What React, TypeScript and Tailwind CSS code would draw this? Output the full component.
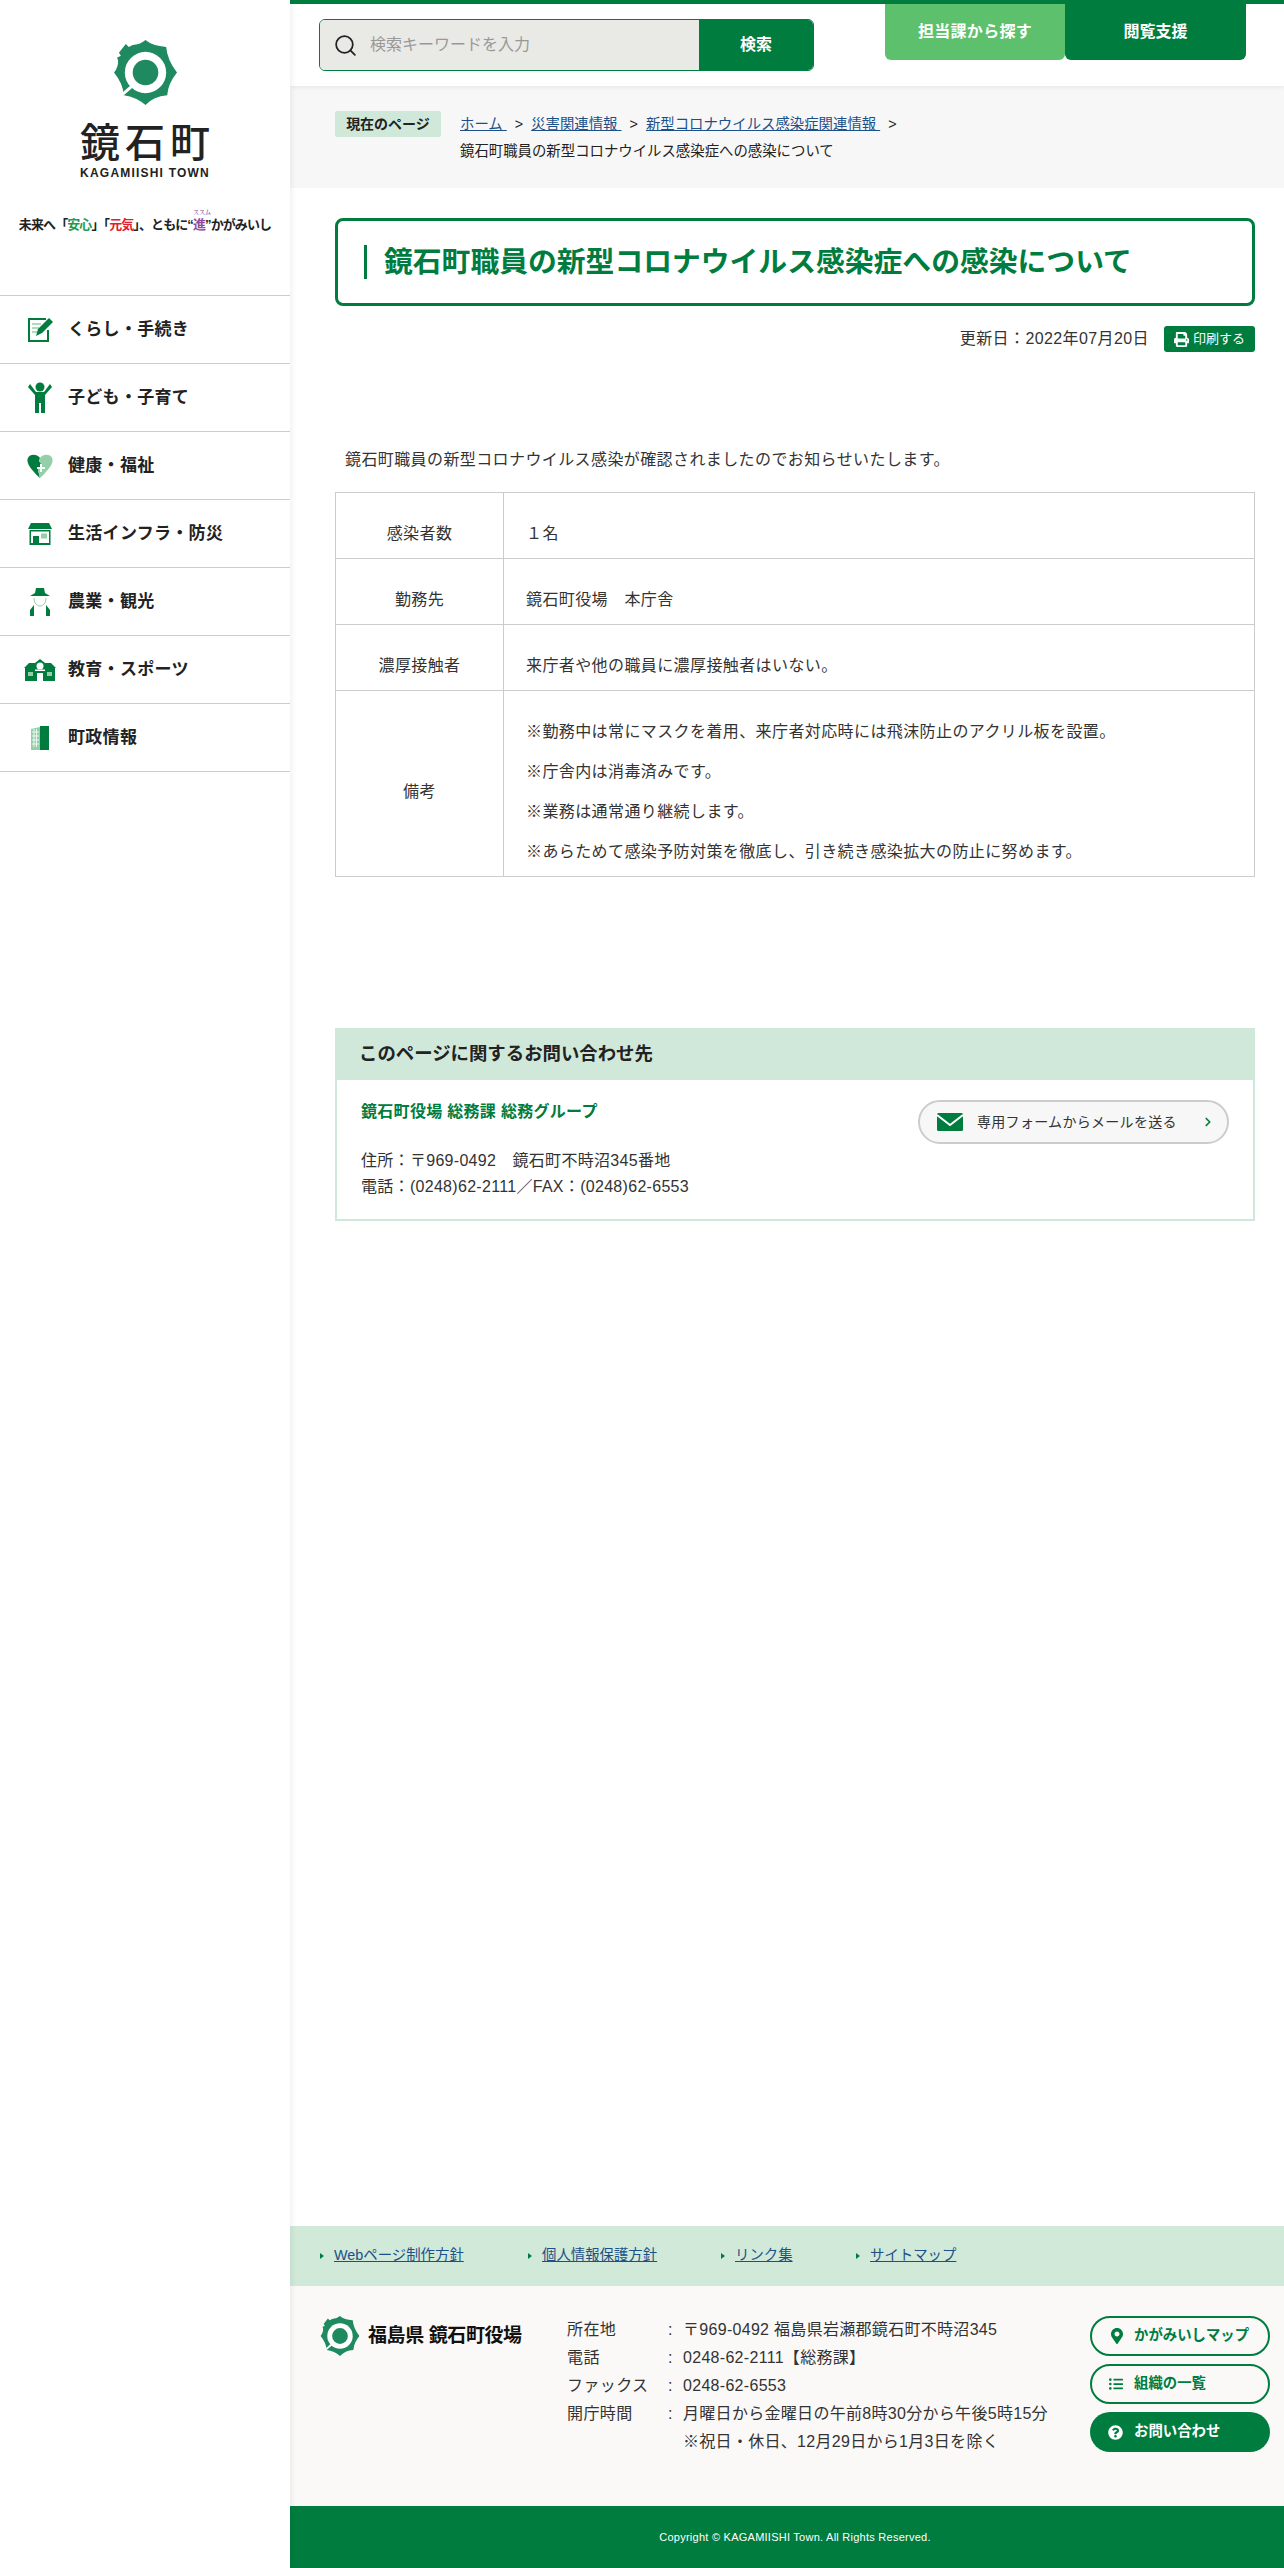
import { ChevronRight, Search } from "lucide-react";
import { FaListUl, FaMapMarkerAlt, FaPrint, FaQuestionCircle } from "react-icons/fa";

const green = "text-[#007c3f]";

function Logo({ size }: { size: number }) {
    return (
        <svg width={size} height={size} viewBox="0 0 64 66" className="shrink-0">
            <path
                fill="#1f8a5f"
                d="M32 0 Q39 6 53 7 Q54 20 64 33 Q55 44 54 56 Q40 57 32 66 Q23 58 10 56 Q9 44 0 33 Q5 27 4 20 L3 18 L7 16 L5 13 L12 4 L15 7 L19 5 Q26 5 32 0 Z"
            />
            <circle cx="32" cy="33" r="21" fill="#fff" />
            <circle cx="32" cy="33" r="13" fill="#1f8a5f" />
            <path d="M9 55 L18 47" stroke="#fff" strokeWidth="3" />
        </svg>
    );
}

function NavIcon({ kind }: { kind: number }) {
    const c = "#007c3f";
    const light = "#93cfa9";
    if (kind === 0)
        return (
            <svg width="26" height="26" viewBox="0 0 26 26">
                <path d="M19 2H2v22h19V13" fill="none" stroke={c} strokeWidth="2" />
                <path d="M5 7h9M5 11h7M5 15h5" stroke={light} strokeWidth="1.5" />
                <path d="M22 1l4 4-11 11-6 3 2-7z" fill={c} />
            </svg>
        );
    if (kind === 1)
        return (
            <svg width="24" height="32" viewBox="0 0 24 32">
                <circle cx="12" cy="5" r="4.5" fill={c} />
                <path d="M2 2L0 5l7 8v18h4V21h2v10h4V13l7-8-2-3-6 8H8z" fill={c} />
            </svg>
        );
    if (kind === 2)
        return (
            <svg width="26" height="24" viewBox="0 0 26 24">
                <path d="M13 4C10 0 4 0 1.500 3S0 12 13 24l-2-8 4-5-3-4z" fill={c} />
                <path d="M13 4c3-4 9-4 11.500-1S26 12 13 24l-2-8 4-5-3-4z" fill={light} />
                <path d="M10 13h3v-3h2v3h3v2h-3v3h-2v-3h-3z" fill="#fff" />
            </svg>
        );
    if (kind === 3)
        return (
            <svg width="24" height="22" viewBox="0 0 24 22">
                <path d="M3 0h18l3 6H0z" fill={c} />
                <path d="M1.500 7h21v15h-21z" fill={c} />
                <path d="M3 8.500h18V20H3z" fill="#fff" />
                <path d="M5 13h6v9H5z" fill={c} />
                <path d="M13 10.500h6v5h-6z" fill={light} />
            </svg>
        );
    if (kind === 4)
        return (
            <svg width="20" height="28" viewBox="0 0 20 28">
                <path d="M6 0h8l1 5 5 3H0l5-3z" fill={c} />
                <path d="M4 10c0 5 3 8 6 8s6-3 6-8" fill="none" stroke={light} strokeWidth="1" />
                <path d="M4 17L0 22v6h4v-6zM16 17l4 5v6h-4v-6z" fill={c} />
            </svg>
        );
    if (kind === 5)
        return (
            <svg width="32" height="22" viewBox="0 0 32 22">
                <path d="M0 9l5-5h6l5-4 5 4h6l5 5z" fill={c} />
                <path d="M1 9h30v13H1z" fill={c} />
                <path d="M4 13h5v4H4zM23 13h5v4h-5z" fill={light} />
                <circle cx="16" cy="7" r="3.500" fill="#fff" />
                <path d="M13 14h6v8h-6zM11 10.500h10v1.500H11z" fill="#fff" />
            </svg>
        );
    return (
        <svg width="20" height="24" viewBox="0 0 20 24">
            <path d="M1 3l9-2v23H1z" fill={light} />
            <path d="M10 0h9v24h-9z" fill={c} />
            <path d="M2 6h7M2 10h7M2 14h7M2 18h7M4 3v18M6.500 3v18" stroke="#fff" strokeWidth="0.8" />
        </svg>
    );
}

const navItems = ["くらし・手続き", "子ども・子育て", "健康・福祉", "生活インフラ・防災", "農業・観光", "教育・スポーツ", "町政情報"];

function Sidebar() {
    return (
        <aside className="w-[290px] shrink-0 bg-white relative z-10 shadow-[2px_0_5px_rgba(0,0,0,0.06)]">
            <div className="h-[295px] flex flex-col items-center pt-[40px]">
                <Logo size={65} />
                <div className="mt-[15px] text-[40px] leading-[46px] font-medium text-[#222] tracking-[5px] pl-[5px]">鏡石町</div>
                <div className="text-[12px] leading-[14px] font-bold tracking-[1.2px] text-[#222]">KAGAMIISHI TOWN</div>
                <div className="mt-[36px] text-[13px] leading-[18px] font-bold text-[#222] whitespace-nowrap tracking-[-0.9px]">
                    未来へ「<span className="text-[#1f9a50]">安心</span>」「<span className="text-[#e0202c]">元気</span>」、ともに“
                    <span className="relative text-[#8f4a9c]">
                        進<span className="absolute left-[0px] -top-[9px] text-[6px] leading-[8px] font-normal tracking-normal">ススム</span>
                    </span>
                    ”かがみいし
                </div>
            </div>
            <nav className="border-t border-[#ccc]">
                {navItems.map((item, i) => (
                    <div key={item} className="h-[68px] border-b border-[#ccc] flex items-center">
                        <div className="w-[68px] pl-[12px] flex justify-center shrink-0">
                            <NavIcon kind={i} />
                        </div>
                        <span className="text-[17px] font-bold text-[#222] tracking-[0.3px]">{item}</span>
                    </div>
                ))}
            </nav>
        </aside>
    );
}

function Header() {
    return (
        <header className="h-[86px] border-t-4 border-[#007c3f] flex items-start pl-[29px] shadow-[0_0_6px_rgba(0,0,0,0.1)] relative">
            <div className="mt-[15px] w-[495px] h-[52px] flex rounded-[6px] border border-[#007c3f] overflow-hidden">
                <div className="flex-1 bg-[#e9e9e5] flex items-center pl-[13px] gap-[12px]">
                    <Search size={25} strokeWidth={1.7} className="text-[#222]" />
                    <span className="text-[16px] text-[#999]">検索キーワードを入力</span>
                </div>
                <div className="w-[114px] bg-[#007c3f] flex items-center justify-center text-white text-[16px] font-bold">検索</div>
            </div>
            <div className="ml-[71px] w-[180px] h-[56px] bg-[#5dc06d] rounded-b-[6px] flex items-center justify-center text-white font-bold text-[16px] tracking-[0.3px]">担当課から探す</div>
            <div className="w-[181px] h-[56px] -mt-[4px] pt-[4px] box-content bg-[#007c3f] rounded-b-[6px] flex items-center justify-center text-white font-bold text-[16px]">閲覧支援</div>
        </header>
    );
}

function Breadcrumb() {
    return (
        <div className="h-[102px] bg-[#f7f7f7] pl-[45px] pt-[25px] flex items-start">
            <div className="w-[106px] h-[26px] bg-[#d0e8da] rounded-[2px] flex items-center justify-center text-[14px] font-bold text-[#222]">現在のページ</div>
            <div className="ml-[19px] text-[14.4px] leading-[27px] text-[#222]">
                <div className="flex gap-[8px]">
                    <a className="underline text-[#1d5089]">ホーム&nbsp;</a><span>&gt;</span>
                    <a className="underline text-[#1d5089]">災害関連情報&nbsp;</a><span>&gt;</span>
                    <a className="underline text-[#1d5089]">新型コロナウイルス感染症関連情報&nbsp;</a><span>&gt;</span>
                </div>
                <div>鏡石町職員の新型コロナウイルス感染症への感染について</div>
            </div>
        </div>
    );
}

const rows: { label: string; lines: string[] }[] = [
    { label: "感染者数", lines: ["１名"] },
    { label: "勤務先", lines: ["鏡石町役場　本庁舎"] },
    { label: "濃厚接触者", lines: ["来庁者や他の職員に濃厚接触者はいない。"] },
    {
        label: "備考",
        lines: [
            "※勤務中は常にマスクを着用、来庁者対応時には飛沫防止のアクリル板を設置。",
            "※庁舎内は消毒済みです。",
            "※業務は通常通り継続します。",
            "※あらためて感染予防対策を徹底し、引き続き感染拡大の防止に努めます。",
        ],
    },
];

function Article() {
    return (
        <div className="pl-[45px] pr-[29px]">
            <div className="mt-[30px] h-[88px] border-[3px] border-[#007c3f] rounded-[8px] flex items-center pl-[26px]">
                <h1 className={`border-l-[3px] border-[#007c3f] pl-[17px] text-[28.8px] leading-[34px] font-bold ${green}`}>鏡石町職員の新型コロナウイルス感染症への感染について</h1>
            </div>
            <div className="mt-[20px] flex justify-end items-center gap-[15px]">
                <span className="text-[16px] text-[#333] tracking-[0.4px]">更新日：2022年07月20日</span>
                <div className="w-[91px] h-[26px] bg-[#007c3f] rounded-[3px] flex items-center justify-center gap-[4px] text-white text-[13px]">
                    <FaPrint size={15} />印刷する
                </div>
            </div>
            <p className="mt-[96px] ml-[10px] text-[16px] leading-[24px] text-[#333] tracking-[0.4px]">鏡石町職員の新型コロナウイルス感染が確認されましたのでお知らせいたします。</p>
            <table className="mt-[20px] w-full border-collapse border border-[#ccc] text-[16px] text-[#333] tracking-[0.4px]">
                <tbody>
                    {rows.map((r) => (
                        <tr key={r.label} className="border-b border-[#ccc] last:border-b-0">
                            <td className="w-[168px] text-center pt-[29px] pb-[12px] border-r border-[#ccc] align-middle">{r.label}</td>
                            <td className="pl-[22px] pt-[29px] pb-[12px] align-middle">
                                {r.lines.map((l) => (
                                    <p key={l} className="leading-[24px] mb-[16px] last:mb-0">{l}</p>
                                ))}
                            </td>
                        </tr>
                    ))}
                </tbody>
            </table>
            <section className="mt-[151px] border-2 border-[#d0e8da] border-t-0">
                <h2 className="h-[52px] -mx-[2px] bg-[#d0e8da] flex items-center pl-[24px] text-[18.4px] font-bold text-[#222]">このページに関するお問い合わせ先</h2>
                <div className="h-[139px] pl-[24px] pr-[24px] pt-[20px] flex justify-between items-start">
                    <div className="text-[16px] text-[#333] tracking-[0.3px]">
                        <div className={`font-bold leading-[24px] ${green}`}>鏡石町役場 総務課 総務グループ</div>
                        <div className="mt-[24px] leading-[26px]">住所：〒969-0492　鏡石町不時沼345番地</div>
                        <div className="leading-[26px]">電話：(0248)62-2111／FAX：(0248)62-6553</div>
                    </div>
                    <div className="w-[311px] h-[44px] rounded-full border-2 border-[#ccc] bg-[#f7f7f7] flex items-center pl-[17px] pr-[12px]">
                        <svg width="26" height="18" viewBox="0 0 26 18" className="shrink-0">
                            <rect width="26" height="18" rx="1.500" fill="#007c3f" />
                            <path d="M0 2 L13 12 L26 2" fill="none" stroke="#fff" strokeWidth="2" />
                        </svg>
                        <span className="ml-[14px] text-[14px] text-[#333] flex-1 tracking-[0.3px]">専用フォームからメールを送る</span>
                        <ChevronRight size={14} strokeWidth={3} className="text-[#007c3f]" />
                    </div>
                </div>
            </section>
        </div>
    );
}

const footerLinks = [
    { text: "Webページ制作方針", w: "w-[208px]" },
    { text: "個人情報保護方針", w: "w-[193px]" },
    { text: "リンク集", w: "w-[135px]" },
    { text: "サイトマップ", w: "w-[120px]" },
];

const footerInfo = [
    ["所在地", "〒969-0492 福島県岩瀬郡鏡石町不時沼345"],
    ["電話", "0248-62-2111【総務課】"],
    ["ファックス", "0248-62-6553"],
    ["開庁時間", "月曜日から金曜日の午前8時30分から午後5時15分"],
    ["", "※祝日・休日、12月29日から1月3日を除く"],
];

function Footer() {
    return (
        <footer>
            <div className="h-[60px] bg-[#d0e9d8] flex items-center pl-[30px] text-[14.4px]">
                {footerLinks.map((l) => (
                    <div key={l.text} className={`${l.w} flex items-center gap-[10px]`}>
                        <span className="w-0 h-0 border-y-[3px] border-y-transparent border-l-[4px] border-l-[#007c3f]" />
                        <a className="underline text-[#1d5089]">{l.text}</a>
                    </div>
                ))}
            </div>
            <div className="h-[220px] bg-[#faf9f7] flex pl-[30px] pt-[30px]">
                <div className="w-[247px] h-[40px] flex items-center gap-[8px]">
                    <Logo size={40} />
                    <span className="text-[19px] leading-[28px] font-bold text-[#111] whitespace-nowrap tracking-[-0.4px]">福島県 鏡石町役場</span>
                </div>
                <dl className="w-[523px] text-[16px] leading-[28px] text-[#333]">
                    {footerInfo.map(([k, v]) => (
                        <div key={v} className="flex">
                            <dt className="w-[100px] shrink-0 tracking-[0.4px]">{k}</dt>
                            <dd className="w-[16px] shrink-0 pl-[1px]">{k ? ":" : ""}</dd>
                            <dd className="whitespace-nowrap tracking-[0.3px]">{v}</dd>
                        </div>
                    ))}
                </dl>
                <div className="w-[180px] flex flex-col gap-[8px] text-[14.4px] font-bold">
                    <div className={`h-[40px] rounded-full border-2 border-[#007c3f] flex items-center pl-[17px] ${green}`}>
                        <span className="w-[25px] shrink-0"><FaMapMarkerAlt size={16} /></span>かがみいしマップ
                    </div>
                    <div className={`h-[40px] rounded-full border-2 border-[#007c3f] flex items-center pl-[17px] ${green}`}>
                        <span className="w-[25px] shrink-0"><FaListUl size={14} /></span>組織の一覧
                    </div>
                    <div className="h-[40px] rounded-full bg-[#007c3f] text-white flex items-center pl-[18px]">
                        <span className="w-[26px] shrink-0"><FaQuestionCircle size={15} /></span>お問い合わせ
                    </div>
                </div>
            </div>
            <div className="h-[62px] bg-[#007c3f] flex items-center justify-center pl-[16px] text-[11px] text-white tracking-[0.25px]">
                Copyright © KAGAMIISHI Town. All Rights Reserved.
            </div>
        </footer>
    );
}

export default function App() {
    return (
        <div className="w-[1284px] h-[2568px] flex font-['Liberation_Sans','Noto_Sans_CJK_JP',sans-serif] bg-white">
            <Sidebar />
            <main className="flex-1 flex flex-col">
                <Header />
                <Breadcrumb />
                <div className="flex-1">
                    <Article />
                </div>
                <Footer />
            </main>
        </div>
    );
}
